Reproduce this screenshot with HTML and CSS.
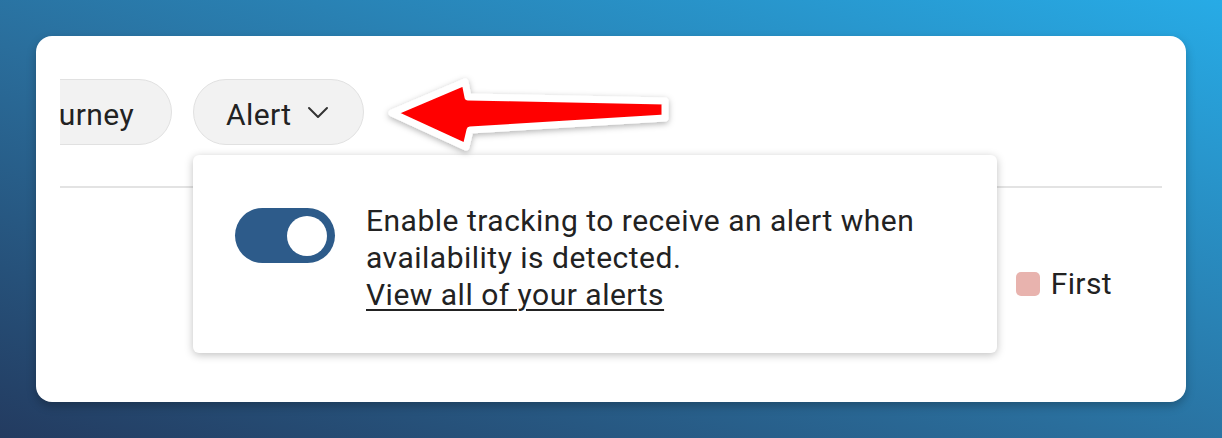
FILE: index.html
```html
<!DOCTYPE html>
<html lang="en">
<head>
  <meta charset="UTF-8">
  <title>Alert tracking</title>
  <link rel="stylesheet" href="styles.css">
</head>
<body>

  <div class="card">
    <nav class="tabs">
      <button class="pill pill-journey">Journey</button>
      <button class="pill pill-alert">
        Alert
        <svg class="chevron" width="22" height="14" viewBox="0 0 22 14">
          <path d="M2 2 L11 11 L20 2" fill="none" stroke="#333" stroke-width="2" stroke-linecap="round" stroke-linejoin="round"/>
        </svg>
      </button>
    </nav>

    <div class="legend">
      <span class="legend-swatch"></span>
      <span class="legend-label">First</span>
    </div>

    <!-- Alert dropdown -->
    <div class="popover">
      <span class="toggle"><span class="toggle-knob"></span></span>
      <p class="popover-text">
        Enable tracking to receive an alert when<br>
        availability is detected.<br>
        <a href="#" class="popover-link">View all of your alerts</a>
      </p>
    </div>
  </div>

  <svg class="arrow" width="300" height="90" viewBox="380 70 300 90">
    <defs>
      <filter id="arrow-shadow" x="-10%" y="-30%" width="120%" height="160%">
        <feDropShadow dx="0" dy="2" stdDeviation="3" flood-color="#000" flood-opacity="0.3"/>
      </filter>
    </defs>
    <polygon points="392,113 465,82 468,97 665,101 665,118 470,130 466,147"
      fill="#ff0000" stroke="#fff" stroke-width="7" stroke-linejoin="round" filter="url(#arrow-shadow)"/>
  </svg>

</body>
</html>
```

FILE: styles.css
```css
body {
  margin: 0;
  padding: 36px;
  height: 438px;
  box-sizing: border-box;
  font-family: 'Roboto', 'Liberation Sans', sans-serif;
  color: #222;
  background: linear-gradient(to top right, #233b60 0%, #2a6e9c 45%, #27abe6 100%);
  overflow: hidden;
  position: relative;
}

.card {
  position: relative;
  height: 366px;
  padding: 0 24px;
  background: #fff;
  border-radius: 16px;
  box-shadow: 0 4px 10px rgba(0,0,0,0.25);
}

.tabs {
  display: flex;
  gap: 21px;
  padding: 43px 0 41px;
  border-bottom: 2px solid #e3e3e3;
  overflow: hidden;
}

.pill {
  flex: none;
  display: flex;
  align-items: center;
  height: 66px;
  padding: 4px 32px 0;
  background: #f2f2f2;
  border: 1.5px solid #e1e1e1;
  border-radius: 33px;
  font-family: inherit;
  font-size: 30px;
  letter-spacing: 0.4px;
  color: #222;
  cursor: pointer;
}

.pill-journey {
  margin-left: -56px;
  width: 168px;
  justify-content: flex-end;
  padding-right: 37px;
}

.pill-alert {
  width: 171px;
  gap: 15px;
}

.chevron {
  margin-top: -2px;
}

.legend {
  display: flex;
  justify-content: flex-end;
  align-items: center;
  gap: 11px;
  padding: 78px 50px 0 0;
}

.legend-swatch {
  width: 24px;
  height: 24px;
  border-radius: 5px;
  background: #e8b3ae;
}

.legend-label {
  font-size: 30px;
  letter-spacing: 0.4px;
}

.popover {
  position: absolute;
  left: 157px;
  top: 119px;
  width: 804px;
  height: 198px;
  box-sizing: border-box;
  display: flex;
  align-items: flex-start;
  gap: 31px;
  padding: 47px 0 0 42px;
  background: #fff;
  border-radius: 6px;
  box-shadow: 0 2px 8px rgba(0,0,0,0.25);
}

.toggle {
  flex: none;
  display: flex;
  justify-content: flex-end;
  align-items: center;
  width: 100px;
  height: 55px;
  margin-top: 6px;
  padding: 0 8px;
  box-sizing: border-box;
  border-radius: 28px;
  background: #2d5b8a;
}

.toggle-knob {
  width: 40px;
  height: 40px;
  border-radius: 50%;
  background: #fff;
}

.popover-text {
  margin: 0;
  font-size: 30px;
  letter-spacing: 0.5px;
  line-height: 37px;
}

.popover-link {
  color: #222;
  text-decoration: underline;
  text-decoration-thickness: 2px;
  text-underline-offset: 4px;
}

.arrow {
  position: absolute;
  left: 380px;
  top: 70px;
}
```
